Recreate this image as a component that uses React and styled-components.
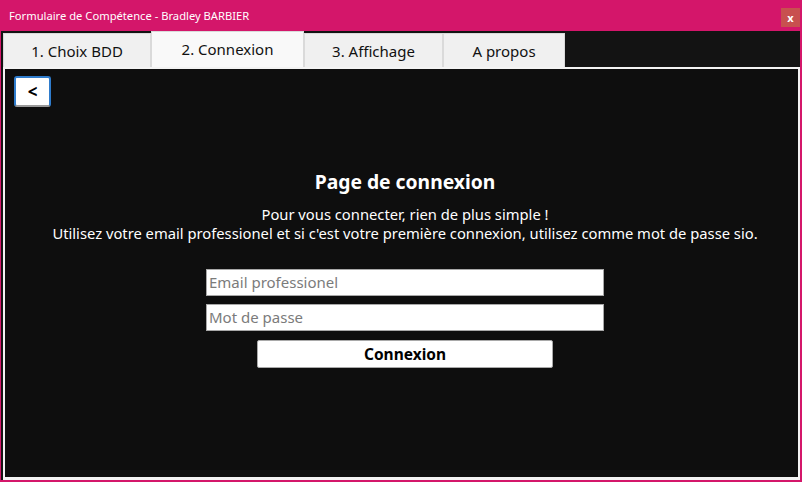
import React, { useState } from 'react';
import styled, { createGlobalStyle } from 'styled-components';

const GlobalStyle = createGlobalStyle`
  html, body {
    margin: 0;
    padding: 0;
    background: #d4166a;
  }
  * {
    box-sizing: border-box;
  }
`;

const tabs = ['1. Choix BDD', '2. Connexion', '3. Affichage', 'A propos'];
const tabWidths = [148, 153, 139, 122];

const Window = styled.div`
  width: 802px;
  height: 482px;
  background: #d4166a;
  display: flex;
  flex-direction: column;
  padding: 0 2px 2px 1px;
  font-family: 'Noto Sans', 'Open Sans', sans-serif;
`;

const TitleBar = styled.div`
  height: 31px;
  display: flex;
  align-items: center;
  justify-content: space-between;
  padding: 0 0 0 8px;
  color: #fff;
  font-size: 11.2px;
`;

const CloseButton = styled.div`
  width: 19px;
  height: 19px;
  background: #c8504f;
  color: #fff;
  font-size: 11px;
  font-weight: bold;
  display: flex;
  align-items: center;
  justify-content: center;
  margin-top: 3px;
`;

const Body = styled.div`
  flex: 1;
  background: #131313;
  display: flex;
  flex-direction: column;
  padding-left: 2px;
`;

const TabRow = styled.div`
  height: 36px;
  display: flex;
  align-items: flex-end;
`;

const Tab = styled.div`
  width: ${p => p.width}px;
  height: ${p => (p.active ? 36 : 34)}px;
  background: ${p => (p.active ? '#f9f9f9' : '#f0f0f0')};
  border: 1px solid #dadada;
  border-bottom: none;
  color: #111;
  font-size: 15px;
  display: flex;
  align-items: center;
  justify-content: center;
  padding-bottom: ${p => (p.active ? 2 : 0)}px;
`;

const Panel = styled.div`
  flex: 1;
  background: #0e0e0e;
  border: 2px solid #f3f3f3;
  border-bottom-width: 3px;
  display: flex;
  flex-direction: column;
`;

const BackButton = styled.button`
  width: 37px;
  height: 31px;
  margin: 7px 0 0 9px;
  background: #fff;
  border: 2px solid #2f7ccc;
  border-bottom-color: #9a9a9a;
  border-radius: 3px;
  font-family: 'Noto Sans', sans-serif;
  font-size: 17px;
  font-weight: bold;
  color: #000;
  padding: 0;
  line-height: 1;
`;

const Center = styled.div`
  display: flex;
  flex-direction: column;
  align-items: center;
  padding-left: 7px;
  margin-top: 62px;
  color: #fff;
`;

const Heading = styled.h1`
  margin: 0;
  font-size: 19.3px;
  font-weight: bold;
  line-height: 26px;
`;

const Intro = styled.p`
  margin: 10px 0 0;
  font-size: 14.75px;
  line-height: 19px;
  text-align: center;
`;

const Form = styled.form`
  display: flex;
  flex-direction: column;
  align-items: center;
  gap: 8px;
  margin-top: 26px;
`;

const Field = styled.input`
  width: 398px;
  height: 27px;
  border: 1px solid #a8a8a8;
  background: #fff;
  padding: 0 2px 2px;
  font-family: 'Noto Sans', sans-serif;
  font-size: 15px;
  color: #000;
  outline: none;
  &::placeholder {
    color: #7b7b7b;
  }
`;

const Submit = styled.button`
  width: 296px;
  height: 28px;
  margin-top: 1px;
  background: #fff;
  border: 1px solid #a9a9a9;
  border-radius: 2px;
  font-family: 'Noto Sans', sans-serif;
  font-size: 15.5px;
  font-weight: bold;
  color: #000;
`;

export default function App() {
  const [active, setActive] = useState(1);

  return (
    <>
      <GlobalStyle />
      <Window>
        <TitleBar>
          <span>Formulaire de Compétence - Bradley BARBIER</span>
          <CloseButton>x</CloseButton>
        </TitleBar>
        <Body>
          <TabRow>
            {tabs.map((t, i) => (
              <Tab
                key={t}
                width={tabWidths[i]}
                active={i === active}
                onClick={() => setActive(i)}
              >
                {t}
              </Tab>
            ))}
          </TabRow>
          <Panel>
            <BackButton>&lt;</BackButton>
            <Center>
              <Heading>Page de connexion</Heading>
              <Intro>
                Pour vous connecter, rien de plus simple !
                <br />
                Utilisez votre email professionel et si c'est votre première
                connexion, utilisez comme mot de passe sio.
              </Intro>
              <Form onSubmit={e => e.preventDefault()}>
                <Field placeholder="Email professionel" />
                <Field type="password" placeholder="Mot de passe" />
                <Submit type="submit">Connexion</Submit>
              </Form>
            </Center>
          </Panel>
        </Body>
      </Window>
    </>
  );
}
